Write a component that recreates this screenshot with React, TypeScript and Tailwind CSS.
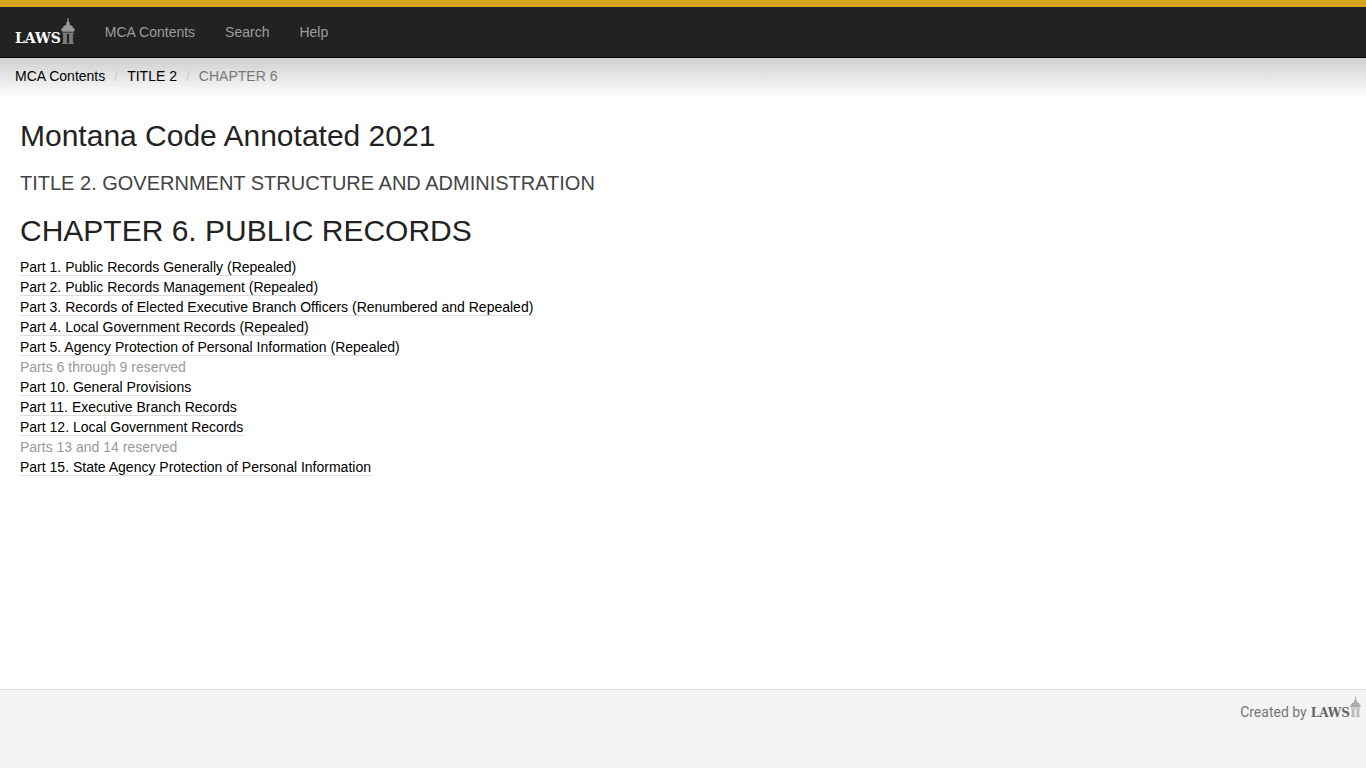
import clsx from 'clsx';

const navLinks = ['MCA Contents', 'Search', 'Help'];

const parts = [
  { label: 'Part 1. Public Records Generally (Repealed)' },
  { label: 'Part 2. Public Records Management (Repealed)' },
  { label: 'Part 3. Records of Elected Executive Branch Officers (Renumbered and Repealed)' },
  { label: 'Part 4. Local Government Records (Repealed)' },
  { label: 'Part 5. Agency Protection of Personal Information (Repealed)' },
  { label: 'Parts 6 through 9 reserved', reserved: true },
  { label: 'Part 10. General Provisions' },
  { label: 'Part 11. Executive Branch Records' },
  { label: 'Part 12. Local Government Records' },
  { label: 'Parts 13 and 14 reserved', reserved: true },
  { label: 'Part 15. State Agency Protection of Personal Information' },
];

function Dome({ className }: { className?: string }) {
  return (
    <svg viewBox="0 0 14 28" className={className} fill="currentColor" aria-hidden="true">
      {/* spire and dome */}
      <path d="M6.500 1h.9l.5 4 .8.6v2.100c2.200.8 3.600 2.100 4 3.900h.9v2l-1.200 1.100H1.600L.4 13.600v-2h.9c.4-1.800 1.800-3.100 4-3.900V5.600l.8-.6z" />
      {/* columns */}
      <path
        d="M1.200 15.500h11.600v1.500h-.9v8.700h.9v1.300H7.400v-1.300h.8V17H5.800v8.700h.8V27H1.200v-1.300h.9V17h-.9z"
        opacity=".75"
      />
    </svg>
  );
}

function Footer() {
  return (
    <footer className="mt-auto h-[79px] border-t border-[#ddd] bg-[#f4f4f4] px-[5px] pt-[5px]">
      <div className="flex items-start justify-end font-['Roboto',sans-serif] text-sm leading-5 text-[#777]">
        <span className="mr-1 pt-[7px]">Created by</span>
        <a href="#laws" aria-label="LAWS II" className="flex items-end">
          <span className="font-['DejaVu_Serif',serif] text-[12px] font-bold leading-3 text-[#666]">LAWS</span>
          <Dome className="h-6 w-[11px] text-[#aaa]" />
        </a>
      </div>
    </footer>
  );
}

export default function App() {
  return (
    <div className="flex min-h-screen flex-col bg-white font-['Liberation_Sans',Arial,sans-serif] text-sm leading-5 text-[#222]">
      <header className="border-b border-t-[7px] border-b-[#080808] border-t-[#d9a521] bg-[#222]">
        <nav className="flex h-[50px] px-[15px]">
          <a href="#home" aria-label="LAWS II" className="mr-[15px] flex items-end pb-3">
            <span className="font-['DejaVu_Serif',serif] text-[14px] font-bold leading-[14px] text-white">LAWS</span>
            <Dome className="h-7 w-[14px] text-[#999]" />
          </a>
          {navLinks.map((link) => (
            <a key={link} href="#nav" className="p-[15px] text-[#9d9d9d] hover:text-white">
              {link}
            </a>
          ))}
        </nav>
      </header>

      <nav aria-label="Breadcrumb" className="bg-linear-to-b from-[#d0d0d0] to-white px-[15px] pb-3 pt-2">
        <ol className="flex">
          <li><a href="#contents" className="text-black">MCA Contents</a></li>
          <li className="before:px-[9px] before:text-[#ccc] before:content-['/']">
            <a href="#title-2" className="text-black">TITLE 2</a>
          </li>
          <li className="text-[#777] before:px-[9px] before:text-[#ccc] before:content-['/']">CHAPTER 6</li>
        </ol>
      </nav>

      <main className="px-5 pt-5">
        <h1 className="text-[30px] leading-9">Montana Code Annotated 2021</h1>
        <h2 className="mt-[17px] text-[20px] leading-6 text-[#444]">TITLE 2. GOVERNMENT STRUCTURE AND ADMINISTRATION</h2>
        <h1 className="mt-[18px] text-[30px] leading-9">CHAPTER 6. PUBLIC RECORDS</h1>
        <ul className="mt-2">
          {parts.map((part) => (
            <li key={part.label} className={clsx(part.reserved && 'text-[#999]')}>
              {part.reserved ? part.label : (
                <a href="#part" className="border-b border-[#ddd] text-black">{part.label}</a>
              )}
            </li>
          ))}
        </ul>
      </main>

      <Footer />
    </div>
  );
}
